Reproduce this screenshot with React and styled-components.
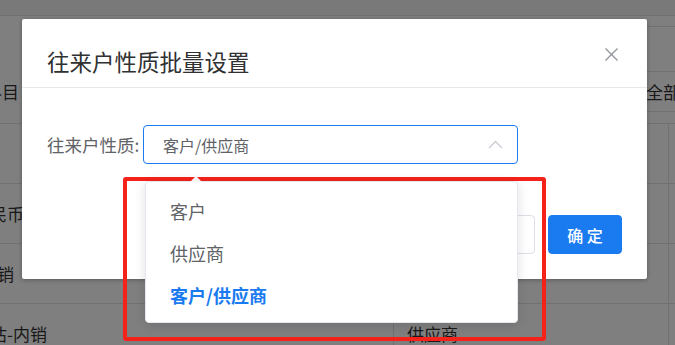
import React from "react";
import styled, { createGlobalStyle } from "styled-components";

const GlobalStyle = createGlobalStyle`
  html, body { margin: 0; padding: 0; }
  body { font-family: "Noto Sans CJK SC", "Noto Sans", sans-serif; }
  * { box-sizing: border-box; }
`;

const Page = styled.div`
  position: relative;
  width: 675px;
  height: 345px;
  overflow: hidden;
  background: #fff;
  color: #333;
  font-size: 17px;
`;

/* ---------- background table ---------- */
const TopBar = styled.div`
  height: 16px;
  background: #f2f2f2;
  border-bottom: 1px solid #e0e0e0;
`;

const HeaderBand = styled.div`
  display: flex;
  height: 108px;
  border-bottom: 1px solid #e0e0e0;
`;

const HeaderLeft = styled.div`
  flex: 1;
  overflow: hidden;
  padding-top: 64px;
  line-height: 24px;
  white-space: nowrap;
`;

const HeaderRight = styled.div`
  width: 35px;
  display: flex;
  flex-direction: column;
`;

const SubRow = styled.div`
  height: ${(p) => p.$h}px;
  border-bottom: ${(p) => (p.$line ? "1px solid #e0e0e0" : "none")};
  display: flex;
  align-items: center;
  padding-left: 6px;
  white-space: nowrap;
  overflow: hidden;
`;

const DataRow = styled.div`
  display: flex;
  height: 60px;
  border-bottom: 1px solid #e0e0e0;
`;

const CellA = styled.div`
  width: 393px;
  display: flex;
  align-items: center;
  overflow: hidden;
  white-space: nowrap;
`;

const CellB = styled.div`
  width: 275px;
  border-left: 1px solid #e0e0e0;
  display: flex;
  align-items: center;
  padding-left: 13px;
  white-space: nowrap;
`;

const CellC = styled.div`
  flex: 1;
  border-left: 1px solid #e0e0e0;
`;

const Shifted = styled.span`
  margin-left: ${(p) => p.$shift}px;
`;

/* ---------- modal ---------- */
const Overlay = styled.div`
  position: absolute;
  inset: 0;
  background: rgba(0, 0, 0, 0.5);
  padding: 19px 0 0 22px;
`;

const Modal = styled.div`
  width: 625px;
  height: 260px;
  background: #fff;
  border-radius: 2px;
  box-shadow: 0 1px 4px rgba(0, 0, 0, 0.3);
  display: flex;
  flex-direction: column;
`;

const Header = styled.div`
  height: 69px;
  border-bottom: 1px solid #e8e8e8;
  display: flex;
  justify-content: space-between;
  align-items: flex-start;
  padding: 28px 29px 0 25px;
`;

const Title = styled.div`
  font-size: 22.5px;
  line-height: 28px;
  color: #303133;
`;

const CloseButton = styled.button`
  border: 0;
  background: none;
  padding: 0;
  margin-top: 1px;
  width: 13px;
  height: 13px;
  display: flex;
  cursor: pointer;
`;

const Body = styled.div`
  padding: 37px 25px 0;
`;

const FormRow = styled.div`
  display: flex;
  align-items: center;
  height: 39px;
`;

const Label = styled.label`
  width: 96px;
  font-size: 17.5px;
  color: #606266;
  white-space: nowrap;
`;

const SelectWrap = styled.div`
  position: relative;
  width: 375px;
  height: 39px;
`;

const SelectBox = styled.div`
  height: 39px;
  border: 1px solid #1a7af0;
  border-radius: 4px;
  display: flex;
  align-items: center;
  justify-content: space-between;
  padding: 0 14px 0 19px;
  font-size: 16px;
  color: #606266;
`;

const Dropdown = styled.ul`
  position: absolute;
  top: 56px;
  left: 2px;
  width: 373px;
  height: 142px;
  margin: 0;
  padding: 8px 0 8px;
  list-style: none;
  background: #fff;
  border: 1px solid #e4e7ed;
  border-radius: 4px;
  box-shadow: 0 2px 12px rgba(0, 0, 0, 0.12);
  z-index: 5;
`;

const Arrow = styled.span`
  position: absolute;
  top: -6px;
  left: 44px;
  width: 0;
  height: 0;
  border-left: 6px solid transparent;
  border-right: 6px solid transparent;
  border-bottom: 6px solid #f4f4f6;
`;

const Option = styled.li`
  height: 42px;
  line-height: 42px;
  padding-left: 24px;
  font-size: 18px;
  color: ${(p) => (p.$selected ? "#1a7af0" : "#606266")};
  font-weight: ${(p) => (p.$selected ? 700 : 400)};
  white-space: nowrap;
`;

const Footer = styled.div`
  display: flex;
  justify-content: flex-end;
  gap: 13px;
  padding: 51px 25px 0;
`;

const Button = styled.button`
  width: 74px;
  height: 39px;
  border-radius: 4px;
  font-family: inherit;
  font-size: 16px;
  font-weight: 500;
  border: 1px solid ${(p) => (p.$primary ? "#1a7af0" : "#dcdfe6")};
  background: ${(p) => (p.$primary ? "#1a7af0" : "#fff")};
  color: ${(p) => (p.$primary ? "#fff" : "#606266")};
  padding: 0;
`;

const Annotation = styled.div`
  position: absolute;
  left: 123px;
  top: 177px;
  width: 423px;
  height: 164px;
  border: 4px solid #f5221b;
  border-radius: 3px;
  pointer-events: none;
`;

const Chevron = () => (
  <svg width="15" height="9" viewBox="0 0 15 9">
    <polyline points="1,8 7.5,1.5 14,8" fill="none" stroke="#c8ccd4" strokeWidth="1.3" />
  </svg>
);

const CloseIcon = () => (
  <svg width="13" height="13" viewBox="0 0 13 13">
    <path d="M0.5 0.5 L12.5 12.5 M12.5 0.5 L0.5 12.5" stroke="#909399" strokeWidth="1.3" />
  </svg>
);

const rows = [
  { a: "", shift: 0, b: "" },
  { a: "人民币", shift: -27, b: "" },
  { a: "内销", shift: -20, b: "" },
  { a: "暂估-内销", shift: -27, b: "供应商" },
];

export default function App() {
  const options = ["客户", "供应商", "客户/供应商"];
  return (
    <Page>
      <GlobalStyle />
      <TopBar />
      <HeaderBand>
        <HeaderLeft>
          <Shifted $shift={-49}>会计科目</Shifted>
        </HeaderLeft>
        <HeaderRight>
          <SubRow $h={11} $line />
          <SubRow $h={45} $line />
          <SubRow $h={40} $line>全部</SubRow>
          <SubRow $h={11} />
        </HeaderRight>
      </HeaderBand>
      {rows.map((r, i) => (
        <DataRow key={i}>
          <CellA>
            <Shifted $shift={r.shift}>{r.a}</Shifted>
          </CellA>
          <CellB>{r.b}</CellB>
          <CellC />
        </DataRow>
      ))}

      <Overlay>
        <Modal>
          <Header>
            <Title>往来户性质批量设置</Title>
            <CloseButton aria-label="关闭">
              <CloseIcon />
            </CloseButton>
          </Header>
          <Body>
            <FormRow>
              <Label>往来户性质:</Label>
              <SelectWrap>
                <SelectBox>
                  <span>客户/供应商</span>
                  <Chevron />
                </SelectBox>
                <Dropdown>
                  <Arrow />
                  {options.map((o) => (
                    <Option key={o} $selected={o === "客户/供应商"}>
                      {o}
                    </Option>
                  ))}
                </Dropdown>
              </SelectWrap>
            </FormRow>
          </Body>
          <Footer>
            <Button>取 消</Button>
            <Button $primary>确 定</Button>
          </Footer>
        </Modal>
      </Overlay>
      <Annotation />
    </Page>
  );
}
